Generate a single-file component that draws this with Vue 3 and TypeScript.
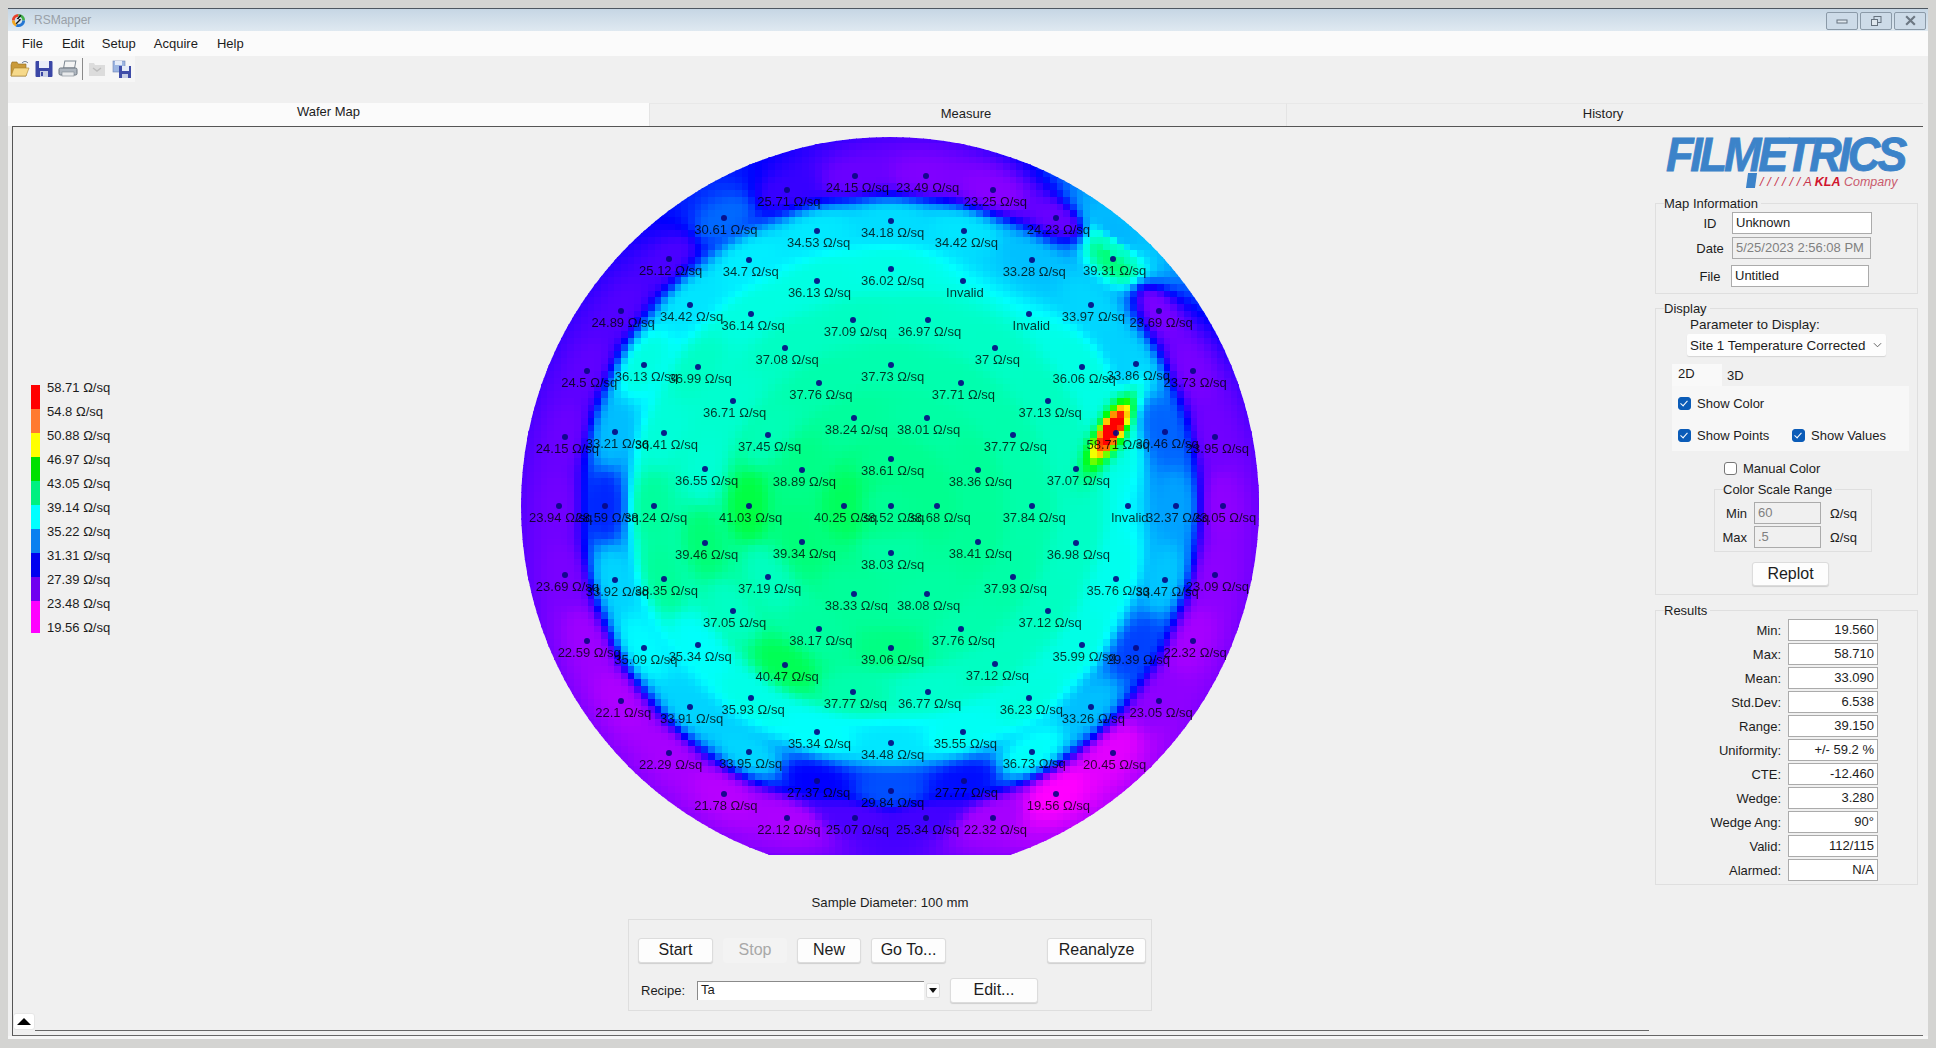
<script setup lang="ts">
import { onMounted, ref } from 'vue'

type Raw = [number, number, string]

// Site coordinates as measured across the wafer: x and y in map pixels.
const toX = (z: number) => 500 + z / 2.063 - 521
const upper: Raw[] = [
  [733,165,'24.15'],[878,165,'23.49'],[592,207,'25.71'],[1018,208,'23.25'],[462,292,'30.61'],[1148,292,'24.23'],
  [806,301,'34.18'],[653,331,'34.53'],[958,331,'34.42'],[348,415,'25.12'],[513,418,'34.7'],[1098,418,'33.28'],
  [1264,415,'39.31'],[806,445,'36.02'],[655,479,'36.13'],[955,479,'Invalid'],[391,553,'34.42'],[1220,553,'33.97'],
  [250,571,'24.89'],[1360,571,'23.69'],[518,580,'36.14'],[1092,580,'Invalid'],[729,598,'37.09'],[882,598,'36.97'],
  [588,682,'37.08'],[1022,682,'37'],[298,731,'36.13'],[806,731,'37.73'],[1313,730,'33.86'],[409,739,'36.99'],
  [1201,739,'36.06'],[180,751,'24.5'],[1430,751,'23.73'],[658,787,'37.76'],[952,787,'37.71'],[480,841,'36.71'],
  [1131,841,'37.13'],[731,892,'38.24'],[880,892,'38.01'],[238,934,'33.21'],[339,937,'36.41'],[1271,937,'58.71'],
  [1372,934,'30.46'],[135,949,'24.15'],[1476,949,'23.95'],[552,943,'37.45'],[1059,943,'37.77'],[806,1015,'38.61'],
  [422,1045,'36.55'],[624,1048,'38.89'],[987,1048,'38.36'],[1189,1045,'37.07'],
]
const lower: Raw[] = [
  [121,76,'23.94'],[217,76,'28.59'],[317,76,'38.24'],[513,76,'41.03'],[709,76,'40.25'],[806,76,'38.52'],
  [902,76,'38.68'],[1098,76,'37.84'],[1295,76,'Invalid'],[1394,76,'32.37'],[1491,76,'23.05'],[422,187,'39.46'],
  [624,184,'39.34'],[987,184,'38.41'],[1189,187,'36.98'],[806,217,'38.03'],[135,283,'23.69'],[238,298,'33.92'],
  [339,295,'38.35'],[552,289,'37.19'],[1059,289,'37.93'],[1271,295,'35.76'],[1372,298,'33.47'],[1476,283,'23.09'],
  [731,340,'38.33'],[880,340,'38.08'],[480,391,'37.05'],[1131,391,'37.12'],[658,445,'38.17'],[952,445,'37.76'],
  [180,481,'22.59'],[1430,481,'22.32'],[297,502,'35.09'],[806,502,'39.06'],[409,493,'35.34'],[1201,493,'35.99'],
  [1313,502,'29.39'],[588,551,'40.47'],[1022,550,'37.12'],[729,634,'37.77'],[882,634,'36.77'],[518,652,'35.93'],
  [1092,652,'36.23'],[250,661,'22.1'],[1360,661,'23.05'],[391,679,'33.91'],[1220,679,'33.26'],[655,754,'35.34'],
  [956,754,'35.55'],[806,787,'34.48'],[513,814,'33.95'],[1098,814,'36.73'],[348,817,'22.29'],[1264,817,'20.45'],
  [653,901,'27.37'],[958,901,'27.77'],[806,931,'29.84'],[462,940,'21.78'],[1148,940,'19.56'],[592,1012,'22.12'],
  [733,1012,'25.07'],[878,1012,'25.34'],[1018,1012,'22.32'],
]

const sites = [
  ...upper.map(([x, y, v]) => ({ x: toX(x), y: 120 + y / 3 - 136, v })),
  ...lower.map(([x, y, v]) => ({ x: toX(x), y: 480 + y / 3 - 136, v })),
]

const legend = [
  { label: '58.71', color: '#ff0000' }, { label: '54.8', color: '#ff7a30' }, { label: '50.88', color: '#ffff00' },
  { label: '46.97', color: '#00e000' }, { label: '43.05', color: '#00f080' }, { label: '39.14', color: '#00ffff' },
  { label: '35.22', color: '#0a80f0' }, { label: '31.31', color: '#0000f0' }, { label: '27.39', color: '#7000f0' },
  { label: '23.48', color: '#ff00ff' }, { label: '19.56', color: '' },
]

const results = [
  ['Min:', '19.560'], ['Max:', '58.710'], ['Mean:', '33.090'], ['Std.Dev:', '6.538'], ['Range:', '39.150'],
  ['Uniformity:', '+/- 59.2 %'], ['CTE:', '-12.460'], ['Wedge:', '3.280'], ['Wedge Ang:', '90°'],
  ['Valid:', '112/115'], ['Alarmed:', 'N/A'],
]

const stops: [number, number, number, number][] = [
  [19.56, 255, 0, 255], [23.48, 128, 0, 255], [27.39, 0, 0, 255], [31.31, 0, 128, 255], [35.22, 0, 255, 255],
  [39.14, 0, 255, 128], [43.05, 0, 255, 0], [46.97, 255, 255, 0], [50.88, 255, 128, 0], [54.8, 255, 0, 0], [58.71, 255, 0, 0],
]

function colorFor(v: number): string {
  if (v <= stops[0][0]) return 'rgb(255,0,255)'
  for (let i = 1; i < stops.length; i++) {
    if (v <= stops[i][0]) {
      const a = stops[i - 1]
      const b = stops[i]
      const t = (v - a[0]) / (b[0] - a[0])
      return `rgb(${a[1] + (b[1] - a[1]) * t},${a[2] + (b[2] - a[2]) * t},${a[3] + (b[3] - a[3]) * t})`
    }
  }
  return 'rgb(255,0,0)'
}

const canvas = ref<HTMLCanvasElement | null>(null)

onMounted(() => {
  const el = canvas.value
  const ctx = el?.getContext('2d')
  if (!el || !ctx) return
  const cx = 369.5
  const cy = 369.3
  const polar = (x: number, y: number, v: number) => ({
    x,
    y,
    v,
    r: Math.hypot(x - cx, y - cy),
    a: Math.atan2(y - cy, x - cx),
  })
  const known = sites
    .filter((s) => s.v !== 'Invalid')
    .map((s) => {
      const v = parseFloat(s.v)
      return polar(s.x, s.y, v > 50 ? 36 : v === 36.73 ? 35.4 : v)
    })
  // Extra control values for the cool wedge in the upper right of the wafer.
  known.push(polar(594, 114, 37), polar(596, 95, 33))
  const cell = 6.7
  const radial = 2.4
  ctx.beginPath()
  ctx.arc(369, 369, 369, 0, Math.PI * 2)
  ctx.clip()
  for (let gy = 0; gy * cell < 718; gy++) {
    for (let gx = 0; gx * cell < 738; gx++) {
      const px = (gx + 0.5) * cell
      const py = (gy + 0.5) * cell
      const r = Math.hypot(px - cx, py - cy)
      const a = Math.atan2(py - cy, px - cx)
      let sum = 0
      let weight = 0
      for (const s of known) {
        let da = Math.abs(a - s.a)
        if (da > Math.PI) da = 2 * Math.PI - da
        const rm = (r + s.r) / 2
        const tangential = r < 60 ? Math.hypot(px - s.x, py - s.y) : rm * da
        const d2 = (radial * (r - s.r)) ** 2 + tangential ** 2 + 9
        const w = 1 / (d2 * d2)
        sum += w * s.v
        weight += w
      }
      let value = sum / weight
      // Narrow hot spot around the 58.71 site, running along the wafer's rim direction.
      const hx = px - 591
      const hy = py - 294
      const along = hx * 0.51 - hy * 0.86
      const across = hx * 0.86 + hy * 0.51
      value += 24 * Math.exp(-((along * along) / (2 * 24 * 24) + (across * across) / (2 * 8 * 8)))
      ctx.fillStyle = colorFor(value)
      ctx.fillRect(Math.floor(gx * cell), Math.floor(gy * cell), Math.ceil(cell) + 1, Math.ceil(cell) + 1)
    }
  }
})
</script>

<template>
  <div class="screen">
    <div class="window">
      <header class="titlebar">
        <svg class="app-icon" viewBox="0 0 16 16" width="15" height="15">
          <path d="M8 1a7 7 0 0 0-7 7h3a4 4 0 0 1 4-4z" fill="#e8412a" />
          <path d="M1 8a7 7 0 0 0 4 6.3l1.5-2.6A4 4 0 0 1 4 8z" fill="#f2a51e" />
          <path d="M8 1a7 7 0 0 1 7 7h-3a4 4 0 0 0-4-4z" fill="#3fae49" />
          <path d="M15 8a7 7 0 0 1-10 6.3l1.5-2.6A4 4 0 0 0 12 8z" fill="#2477d4" />
          <path d="M10 2 6 6l3 1-4 4 1 1 5-5-3-1 3-3z" fill="#111" />
        </svg>
        <span class="app-name">RSMapper</span>
        <div class="win-buttons">
          <button class="win-btn"><svg viewBox="0 0 12 8" width="12" height="8"><rect x="1" y="3" width="10" height="3" fill="#dfe7ee" stroke="#66727e" /></svg></button>
          <button class="win-btn"><svg viewBox="0 0 12 12" width="12" height="12"><rect x="4" y="1.5" width="7" height="6" fill="none" stroke="#66727e" /><rect x="1.5" y="4.5" width="6" height="6" fill="#dfe7ee" stroke="#66727e" /></svg></button>
          <button class="win-btn"><svg viewBox="0 0 12 10" width="13" height="11"><path d="M2 1l8 8M10 1 2 9" stroke="#6d7883" stroke-width="2" /></svg></button>
        </div>
      </header>

      <nav class="menubar">
        <span class="menu m-file">File</span>
        <span class="menu m-edit">Edit</span>
        <span class="menu m-setup">Setup</span>
        <span class="menu m-acquire">Acquire</span>
        <span class="menu">Help</span>
      </nav>

      <div class="toolbar">
        <svg viewBox="0 0 20 18" width="20" height="18">
          <path d="M1 5V16h15V4H8L7 2H2z" fill="#c99a3a" stroke="#8f6a20" stroke-width=".6" />
          <path d="M1 16 4 8h15l-3 8z" fill="#f6d98a" stroke="#a67f2d" stroke-width=".6" />
          <path d="M12 3c2-2 4-2 6 0" fill="none" stroke="#5c6f8a" stroke-width="1" />
        </svg>
        <svg viewBox="0 0 18 18" width="18" height="18">
          <rect x="0.5" y="1" width="17" height="16" rx="1" fill="#3b47a6" />
          <rect x="4" y="1" width="10" height="7" fill="#e9edf8" />
          <rect x="5" y="11" width="8" height="6" fill="#c9d0e6" />
          <rect x="6" y="12" width="2" height="4" fill="#3b47a6" />
        </svg>
        <svg viewBox="0 0 20 18" width="20" height="18">
          <rect x="5" y="1" width="11" height="7" fill="#f4f4f4" stroke="#7d8791" transform="skewX(-10) translate(2 0)" />
          <rect x="1" y="8" width="18" height="7" rx="1.5" fill="#aeb6bf" stroke="#6e7780" />
          <rect x="4" y="12" width="12" height="4" fill="#e8eaec" stroke="#7d8791" stroke-width=".6" />
        </svg>
        <span class="tool-sep"></span>
        <svg viewBox="0 0 20 18" width="20" height="18">
          <path d="M2 3h5l1 2h10v11H2z" fill="#dcdcdc" />
          <path d="M6 8l4 3 4-3" fill="none" stroke="#bdbdbd" stroke-width="1.4" />
        </svg>
        <svg viewBox="0 0 20 18" width="20" height="18">
          <rect x="1" y="1" width="12" height="11" fill="#9db6e2" stroke="#6d83b4" stroke-width=".6" />
          <rect x="3" y="1" width="7" height="4" fill="#e5ecf8" />
          <rect x="7" y="6" width="12" height="12" fill="#3e4ca8" />
          <rect x="10" y="6" width="7" height="5" fill="#e5ecf8" />
          <rect x="10" y="14" width="6" height="4" fill="#c5cde6" />
        </svg>
      </div>

      <div class="tabs">
        <div class="tab active">Wafer Map</div>
        <div class="tab">Measure</div>
        <div class="tab">History</div>
      </div>

      <main class="panel">
        <section class="legend-col">
          <div class="legend">
            <div v-for="item in legend" :key="item.label" class="legend-row">
              <span class="swatch" :style="{ background: item.color || 'transparent' }"></span>
              <span>{{ item.label }} Ω/sq</span>
            </div>
          </div>
        </section>

        <section class="center-col">
          <div class="wafer">
            <canvas ref="canvas" width="738" height="718"></canvas>
            <template v-for="(s, i) in sites" :key="i">
              <span class="dot" :style="{ left: s.x + 'px', top: s.y + 'px' }"></span>
              <span class="site-label" :style="{ left: s.x + 2 + 'px', top: s.y + 12 + 'px' }">{{ s.v === 'Invalid' ? 'Invalid' : s.v + ' Ω/sq' }}</span>
            </template>
          </div>
          <div class="sample">Sample Diameter: 100 mm</div>
          <div class="actions">
            <div class="action-row">
              <button class="btn w75">Start</button>
              <button class="btn w64 off">Stop</button>
              <button class="btn w64">New</button>
              <button class="btn w75">Go To...</button>
              <button class="btn reanalyze">Reanalyze</button>
            </div>
            <div class="recipe-row">
              <span class="recipe-label">Recipe:</span>
              <div class="recipe-field">Ta</div>
              <button class="recipe-drop"><i></i></button>
              <button class="btn edit">Edit...</button>
            </div>
          </div>
        </section>

        <aside class="side">
          <div class="logo">
            <span class="logo-word">FILMETRICS</span>
            <span class="logo-leg"></span>
            <span class="logo-tag"><span class="ticks">/ / / / / /</span> A <b>KLA</b> <em>Company</em></span>
          </div>

          <div class="group info">
            <span class="group-title">Map Information</span>
            <div class="info-row r1"><label>ID</label><div class="field w140">Unknown</div></div>
            <div class="info-row r2"><label>Date</label><div class="field w139 dim">5/25/2023 2:56:08 PM</div></div>
            <div class="info-row r3"><label>File</label><div class="field w138">Untitled</div></div>
          </div>

          <div class="group display">
            <span class="group-title">Display</span>
            <div class="param-label">Parameter to Display:</div>
            <div class="select">
              <span>Site 1 Temperature Corrected</span>
              <svg viewBox="0 0 10 6" width="9" height="6"><path d="M1 1l4 4 4-4" fill="none" stroke="#555" stroke-width="1" /></svg>
            </div>
            <div class="mini-tabs">
              <span class="mini-tab on">2D</span>
              <span class="mini-tab">3D</span>
            </div>
            <div class="mini-panel">
              <div class="check-row first"><span class="check on"></span>Show Color</div>
              <div class="check-row"><span class="check on"></span><span class="show-points">Show Points</span><span class="check on"></span>Show Values</div>
            </div>
            <div class="check-row manual"><span class="check"></span>Manual Color</div>
            <div class="group scale">
              <span class="group-title">Color Scale Range</span>
              <div class="scale-row"><label>Min</label><div class="field dim scale-field">60</div><span>Ω/sq</span></div>
              <div class="scale-row"><label>Max</label><div class="field dim scale-field">.5</div><span>Ω/sq</span></div>
            </div>
            <button class="btn replot">Replot</button>
          </div>

          <div class="group results">
            <span class="group-title">Results</span>
            <div v-for="[name, value] in results" :key="name" class="result-row">
              <label>{{ name }}</label>
              <div class="field value">{{ value }}</div>
            </div>
          </div>
        </aside>

        <button class="collapse"><i></i></button>
        <div class="rule"></div>
      </main>
      <div class="under"></div>
    </div>
  </div>
</template>

<style>
html, body { margin: 0; background: #d4d4d4; }
</style>

<style scoped>
.screen {
  width: 1936px;
  height: 1048px;
  box-sizing: border-box;
  padding: 8px 8px 9px;
  background: #d4d4d2;
  font: 13px "Liberation Sans", Arial, sans-serif;
  color: #1c1c1c;
  overflow: hidden;
}
.window { height: 100%; display: flex; flex-direction: column; background: #f0f0f0; }
button { font-family: inherit; padding: 0; }

.titlebar {
  height: 23px;
  box-sizing: border-box;
  border-top: 1px solid #4d5660;
  background: linear-gradient(#c6d6e4, #dfe9f1);
  display: flex;
  align-items: center;
  padding: 0 2px 0 3px;
}
.app-icon { flex: none; }
.app-name { margin-left: 8px; font-size: 12px; color: #9aa1a8; }
.win-buttons { margin-left: auto; display: flex; gap: 2px; margin-top: 1px; }
.win-btn {
  width: 32px;
  height: 18px;
  border: 1px solid #8b9aa8;
  border-radius: 2px;
  background: #cddbe8;
  display: flex;
  align-items: center;
  justify-content: center;
}
.menubar {
  height: 24px;
  background: #fbfbfb;
  display: flex;
  align-items: center;
  padding: 0 0 1px 14px;
}
.menu { margin-right: 23px; }
.m-file { margin-right: 19px; }
.m-edit { margin-right: 17.5px; }
.m-setup { margin-right: 18px; }
.m-acquire { margin-right: 19px; }

.toolbar {
  height: 26px;
  width: 127px;
  box-sizing: border-box;
  background: #f6f6f6;
  display: flex;
  align-items: center;
  gap: 5px;
  padding-left: 2px;
  flex: none;
}
.tool-sep { width: 1px; height: 22px; background: #8a8a8a; margin: 0 -1px; }

.tabs {
  margin-top: 21px;
  height: 23px;
  display: flex;
  flex: none;
  padding-right: 5px;
}
.tab {
  flex: 1;
  text-align: center;
  padding: 2px 4px 0 0;
  box-sizing: border-box;
  border-top: 1px solid #e8e8e8;
  border-left: 1px solid #e4e4e4;
  font-size: 13px;
}
.tab.active { flex: none; width: 641px; background: #fbfbfb; padding: 1px 0 0; border: 0; }

.panel {
  flex: 1;
  min-height: 0;
  position: relative;
  margin-left: 4px;
  margin-right: 5px;
  border-top: 1px solid #555;
  border-left: 1px solid #555;
  border-bottom: 1px solid #666;
  display: grid;
  grid-template-columns: 300px 1154px 1fr;
  align-items: start;
}

.legend-col { padding: 258px 0 0 18px; }
.legend { display: flex; flex-direction: column; }
.legend-row { height: 24px; display: flex; align-items: flex-start; line-height: 6px; }
.legend-row > span:last-child { margin-left: 7px; white-space: nowrap; }
.swatch { width: 9px; height: 24px; flex: none; }
.legend-row:nth-child(10) .swatch { height: 32px; }

.center-col { padding-top: 10px; display: flex; flex-direction: column; align-items: center; }
.wafer { position: relative; width: 738px; height: 718px; }
.wafer canvas { display: block; }
.dot {
  position: absolute;
  width: 6px;
  height: 6px;
  margin: -3px 0 0 -3px;
  border-radius: 50%;
  background: rgba(8, 8, 130, 0.9);
}
.site-label {
  position: absolute;
  transform: translate(-50%, -50%);
  white-space: nowrap;
  color: rgba(0, 0, 0, 0.78);
  line-height: 14px;
}
.sample { margin-top: 40px; line-height: 16px; height: 24px; font-size: 13.2px; }
.actions {
  width: 524px;
  height: 92px;
  box-sizing: border-box;
  border: 1px solid #dedede;
  padding: 18px 5px 0 9px;
}
.action-row { display: flex; gap: 10px; }
.btn {
  height: 25px;
  box-sizing: border-box;
  border: 1px solid #dcdcdc;
  border-radius: 3px;
  background: #fdfdfd;
  box-shadow: 0 1px 1px #cfcfcf;
  font-size: 16px;
  color: #1c1c1c;
  flex: none;
  padding-bottom: 1px;
}
.w75 { width: 75px; }
.w64 { width: 64px; }
.off { background: #f3f3f3; color: #a8a8a8; border-color: #f3f3f3; box-shadow: none; }
.reanalyze { width: 99px; margin-left: auto; }
.recipe-row { display: flex; align-items: center; margin-top: 15px; }
.recipe-label { width: 59px; padding-left: 3px; box-sizing: border-box; }
.recipe-field {
  width: 227px;
  height: 19px;
  box-sizing: border-box;
  background: #fff;
  border-top: 1px solid #8a8a8a;
  border-left: 1px solid #8a8a8a;
  padding-left: 3px;
  line-height: 16px;
}
.recipe-drop {
  width: 14px;
  height: 15px;
  margin-left: 2px;
  border: 1px solid #dcdcdc;
  border-radius: 2px;
  background: #fdfdfd;
  display: flex;
  align-items: center;
  justify-content: center;
}
.recipe-drop i { border: 4px solid transparent; border-top: 5px solid #111; border-bottom: 0; }
.edit { width: 88px; margin-left: 10px; height: 25px; }

.side { width: 263px; justify-self: end; margin-right: 5px; display: flex; flex-direction: column; }
.logo { position: relative; height: 76px; }
.logo-word {
  position: absolute;
  left: 11px;
  top: 4px;
  font: italic 700 45px/46px "Liberation Sans", Arial, sans-serif;
  letter-spacing: -3.2px;
  color: #3c83c9;
  -webkit-text-stroke: 0.8px #3c83c9;
  white-space: nowrap;
  transform: scaleY(1.06);
  transform-origin: 0 0;
}
.logo-leg {
  position: absolute;
  left: 92px;
  top: 46px;
  width: 9px;
  height: 15px;
  background: #3c83c9;
  transform: skewX(-8deg);
}
.logo-tag {
  position: absolute;
  left: 105px;
  top: 48px;
  font: italic 12.5px/14px "Liberation Sans", Arial, sans-serif;
  color: #c8364d;
  white-space: nowrap;
}
.logo-tag b { font-weight: 700; color: #d0142d; }
.logo-tag em { font-style: italic; color: #c95a6c; }
.ticks { letter-spacing: 0.2px; }

.group { position: relative; border: 1px solid #dfdfdf; box-sizing: border-box; }
.group-title {
  position: absolute;
  left: 8px;
  top: -8px;
  padding-right: 3px;
  background: #f0f0f0;
  line-height: 15px;
  white-space: nowrap;
}
.info { height: 91px; padding: 8px 0 0 32px; }
.info-row { display: flex; align-items: center; height: 22px; }
.info-row label { width: 44px; text-align: center; }
.r2 { margin-top: 3px; }
.r3 { margin-top: 6px; }
.field {
  height: 22px;
  box-sizing: border-box;
  border: 1px solid #ababab;
  background: #fff;
  padding: 0 3px;
  line-height: 20px;
  white-space: nowrap;
  color: #1c1c1c;
}
.w140 { width: 140px; }
.w139 { width: 139px; }
.w138 { width: 138px; margin-left: -1px; }
.dim { background: #f0f0f0; color: #808080; }

.display { height: 287px; margin-top: 14px; padding: 8px 0 0; }
.param-label { margin-left: 34px; line-height: 16px; font-size: 13.5px; }
.select {
  margin: 1px 0 0 31px;
  width: 199px;
  height: 22px;
  box-sizing: border-box;
  border-radius: 2px;
  background: #fdfdfd;
  box-shadow: 0 1px 1px #d4d4d4;
  display: flex;
  align-items: center;
  justify-content: space-between;
  padding: 0 4px 0 3px;
  font-size: 13.4px;
}
.mini-tabs { display: flex; margin: 8px 0 0 16px; height: 22px; }
.mini-tab { width: 43px; padding-left: 5px; line-height: 24px; }
.mini-tab.on { width: 44px; padding-left: 6px; background: #f9f9f9; line-height: 20px; }
.mini-panel { margin-left: 16px; width: 237px; height: 65px; background: #f7f7f7; padding: 10px 0 0 6px; box-sizing: border-box; }
.check-row { display: flex; align-items: center; height: 14px; white-space: nowrap; font-size: 13px; }
.check-row.first { margin-bottom: 18px; }
.check {
  width: 13px;
  height: 13px;
  flex: none;
  box-sizing: border-box;
  border: 1px solid #777;
  border-radius: 3px;
  background: #fff;
  margin-right: 6px;
  position: relative;
}
.check.on { background: #0b5cb8; border-color: #0b5cb8; }
.check.on::after {
  content: "";
  position: absolute;
  left: 3px;
  top: 1px;
  width: 3px;
  height: 6px;
  border: solid #fff;
  border-width: 0 1.4px 1.4px 0;
  transform: rotate(42deg);
}
.show-points { width: 95px; }
.manual { margin: 10px 0 0 68px; }
.scale { margin: 14px 0 0 58px; width: 158px; height: 63px; padding-top: 12px; }
.scale-row { display: flex; align-items: center; height: 22px; margin-bottom: 2px; }
.scale-row label { width: 32px; text-align: right; }
.scale-field { width: 67px; margin: 0 9px 0 7px; }
.replot { display: block; width: 77px; height: 24px; margin: 10px 0 0 96px; }

.results { height: 275px; margin-top: 15px; padding-top: 8px; }
.result-row { display: flex; align-items: center; height: 22px; margin-bottom: 2px; }
.result-row label { width: 125px; text-align: right; margin-right: 7px; }
.value { width: 90px; text-align: right; }

.collapse {
  position: absolute;
  left: 0;
  bottom: 5px;
  width: 22px;
  height: 17px;
  border: 1px solid #e6e6e6;
  border-radius: 3px;
  background: #fff;
  display: flex;
  align-items: center;
  justify-content: center;
}
.collapse i { border: 7px solid transparent; border-bottom: 7px solid #000; border-top: 0; }
.rule {
  position: absolute;
  left: 22px;
  bottom: 4px;
  width: 1614px;
  height: 1px;
  background: #666;
}
.under { height: 3px; flex: none; background: #f6f6f6; }
</style>
